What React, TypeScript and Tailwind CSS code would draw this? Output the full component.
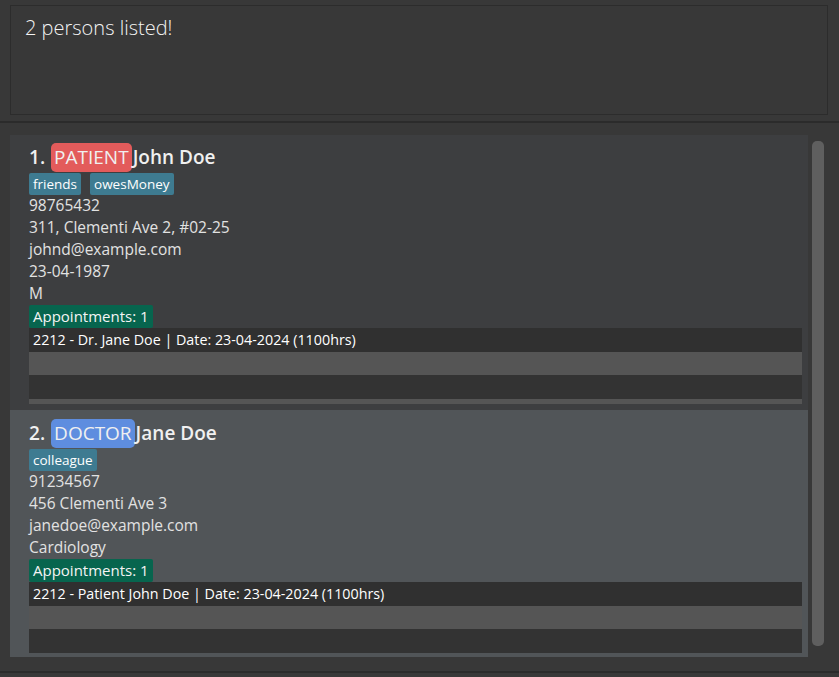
const font = { fontFamily: '"Open Sans", "Noto Sans", sans-serif' }

type Person = {
  index: number
  role: "PATIENT" | "DOCTOR"
  name: string
  tags: string[]
  details: string[]
  appointments: string[]
  selected?: boolean
}

const people: Person[] = [
  {
    index: 1,
    role: "PATIENT",
    name: "John Doe",
    tags: ["friends", "owesMoney"],
    details: ["98765432", "311, Clementi Ave 2, #02-25", "johnd@example.com", "23-04-1987", "M"],
    appointments: ["2212 - Dr. Jane Doe | Date: 23-04-2024 (1100hrs)"],
  },
  {
    index: 2,
    role: "DOCTOR",
    name: "Jane Doe",
    tags: ["colleague"],
    details: ["91234567", "456 Clementi Ave 3", "janedoe@example.com", "Cardiology"],
    appointments: ["2212 - Patient John Doe | Date: 23-04-2024 (1100hrs)"],
    selected: true,
  },
]

function PersonCard({ p }: { p: Person }) {
  return (
    <div
      className={
        p.selected
          ? "bg-[#515558] pt-[9px] pb-[4px] pl-[19px] pr-[6px]"
          : "bg-[#3d3e40] pt-[8px] pb-[6px] pl-[19px] pr-[6px]"
      }
    >
      <div className="flex h-[30px] items-start text-[19px] font-semibold text-[#f0f0f0]">
        <span className="mr-[6px] flex h-[29px] items-center">{p.index}.</span>
        <span
          className={
            p.role === "PATIENT"
              ? "flex h-[29px] items-center rounded-[5px] bg-[#e35b5b] px-[3px] font-normal"
              : "flex h-[29px] items-center rounded-[5px] bg-[#5e8ddf] px-[3px] font-normal"
          }
        >
          {p.role}
        </span>
        <span className="ml-[1px] flex h-[29px] items-center">{p.name}</span>
      </div>
      <div className="flex gap-[9px]">
        {p.tags.map((t) => (
          <span
            key={t}
            className="flex h-[22px] items-center rounded-[2px] bg-[#3e7b91] px-[4px] text-[13.5px] text-white"
          >
            {t}
          </span>
        ))}
      </div>
      {p.details.map((d) => (
        <div key={d} className="flex h-[22px] items-center text-[15.5px] text-[#e2e2e2]">
          {d}
        </div>
      ))}
      <div className="flex h-[23px]">
        <span className="flex h-[23px] items-center rounded-[2px] bg-[#07654e] px-[4px] text-[15px] text-[#f4f4f4]">
          Appointments: {p.appointments.length}
        </span>
      </div>
      <div className="flex flex-col">
        {p.appointments.map((a) => (
          <div key={a} className="flex h-[24px] items-center bg-[#303030] px-[4px] text-[14.3px] text-white">
            {a}
          </div>
        ))}
        <div className="h-[23px] bg-[#555555]" />
        <div className="h-[24px] bg-[#333333]" />
        {!p.selected && <div className="h-[5px] bg-[#555555]" />}
      </div>
    </div>
  )
}

export default function App() {
  return (
    <div className="flex h-[677px] w-[839px] flex-col overflow-hidden bg-[#383838]" style={font}>
      <div className="px-[10px] pt-[5px]">
        <div className="h-[110px] w-[818px] border border-[#2c2c2c] bg-[#383838] px-[14px] pt-[7px] text-[20px] font-light text-[#f4f4f4]">
          2 persons listed!
        </div>
      </div>
      <div className="mt-[6px] h-[2px] bg-[#2b2b2b]" />
      <div className="flex flex-1 pt-[12px] pl-[10px]">
        <div className="w-[798px]">
          {people.map((p) => (
            <PersonCard key={p.index} p={p} />
          ))}
        </div>
        <div className="ml-[4px] pt-[6px]">
          <div className="h-[505px] w-[12px] rounded-[5px] bg-[#5f5f5f]" />
        </div>
      </div>
      <div className="mt-[1px] h-[2px] bg-[#2b2b2b]" />
      <div className="h-[4px]" />
    </div>
  )
}
